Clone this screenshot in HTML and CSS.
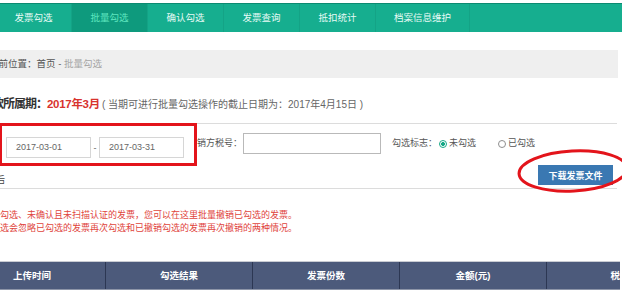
FILE: index.html
```html
<!DOCTYPE html>
<html lang="zh">
<head>
<meta charset="utf-8">
<link rel="stylesheet" href="styles.css">
</head>
<body>
<div class="page">
  <nav class="nav">
    <a class="nav-item">发票勾选</a>
    <a class="nav-item active">批量勾选</a>
    <a class="nav-item">确认勾选</a>
    <a class="nav-item">发票查询</a>
    <a class="nav-item">抵扣统计</a>
    <a class="nav-item wide">档案信息维护</a>
  </nav>
  <div class="main">
    <div class="crumb">当前位置：首页 - <span class="crumb-cur">批量勾选</span></div>
    <div class="heading"><span class="h-label">税款所属期：</span><span class="h-red">2017年3月</span><span class="h-note">( 当期可进行批量勾选操作的截止日期为：2017年4月15日 )</span></div>
    <div class="form">
      <div class="row1">
        <div class="date-group">
          <div class="input date">2017-03-01</div>
          <span class="dash">-</span>
          <div class="input date">2017-03-31</div>
        </div>
        <span class="label tax-label">销方税号：</span>
        <div class="input tax"></div>
        <span class="label flag-label">勾选标志：</span>
        <span class="radio checked"></span><span class="label opt opt-first">未勾选</span>
        <span class="radio"></span><span class="label opt">已勾选</span>
      </div>
      <div class="row2">
        <span class="cut-label">后</span>
        <button class="btn">下载发票文件</button>
      </div>
    </div>
    <div class="notice">
      <p>勾选、未确认且未扫描认证的发票，您可以在这里批量撤销已勾选的发票。</p>
      <p>选会忽略已勾选的发票再次勾选和已撤销勾选的发票再次撤销的两种情况。</p>
    </div>
    <div class="table-wrap">
      <div class="thead">
        <div class="th">上传时间</div>
        <div class="th">勾选结果</div>
        <div class="th">发票份数</div>
        <div class="th">金额(元)</div>
        <div class="th">税额</div>
      </div>
    </div>
  </div>
  <div class="mark-rect"></div>
  <svg class="mark-ellipse" width="112" height="50" viewBox="0 0 112 50">
    <ellipse cx="57" cy="24" rx="54" ry="20" fill="none" stroke="#e3141b" stroke-width="3" transform="rotate(-3 57 24)"/>
  </svg>
</div>
</body>
</html>
```
FILE: styles.css
```css
* { box-sizing: border-box; }
html, body { margin: 0; padding: 0; background: #fff; }
body {
  font-family: "Liberation Sans", "Noto Sans CJK SC", sans-serif;
  color: #333;
}
.page {
  position: relative;
  width: 622px;
  height: 290px;
  overflow: hidden;
  padding-top: 3px;
}
.nav {
  display: flex;
  height: 29px;
  margin-left: -4px;
  width: 630px;
  background: #16ae8f;
  border-top: 1px solid #0c8a71;
}
.nav-item {
  width: 76px;
  height: 28px;
  line-height: 28px;
  text-align: center;
  font-size: 9.5px;
  color: #e6fbf5;
  border-right: 1px solid #14a386;
}
.nav-item.wide { width: 94px; }
.nav-item.active {
  background: #0e9a7d;
  color: #5fe6bf;
}
.main { width: 617px; }
.crumb {
  margin-top: 18px;
  height: 28px;
  line-height: 28px;
  background: #efefef;
  width: 618px;
  font-size: 9.5px;
  color: #555;
  text-indent: -11px;
  white-space: nowrap;
  overflow: hidden;
}
.crumb-cur { color: #a5a5a5; }
.heading {
  padding: 17px 0 10px;
  line-height: 16px;
  border-bottom: 1px solid #dcdcdc;
  margin-left: -19px;
  white-space: nowrap;
}
.h-label { font-size: 12px; font-weight: bold; color: #333; letter-spacing: -1px; }
.h-red { font-size: 11.5px; font-weight: bold; color: #d8332e; margin-right: 2px; letter-spacing: -0.3px; }
.h-note { font-size: 10px; color: #666; }
.form {
  padding-top: 9px;
  padding-bottom: 3px;
  border-bottom: 1px solid #dcdcdc;
}
.row1 {
  display: flex;
  align-items: flex-start;
  height: 25px;
}
.date-group {
  display: flex;
  align-items: center;
  margin-left: 6px;
  margin-top: 4px;
}
.input {
  height: 21px;
  border: 1px solid #d6d6d6;
  background: #fff;
  font-size: 9px;
  line-height: 19px;
  color: #666;
}
.input.date { width: 85px; padding-left: 9px; }
.dash {
  width: 8px;
  text-align: center;
  font-size: 9px;
  color: #666;
}
.label {
  font-size: 9px;
  line-height: 21px;
  color: #555;
  white-space: nowrap;
}
.tax-label { margin-left: 13px; margin-right: 1px; }
.input.tax { width: 138px; border-color: #b9b9b9; }
.flag-label { margin-left: 11px; margin-right: 2px; }
.radio {
  width: 8px;
  height: 8px;
  margin-top: 7px;
  margin-right: 2px;
  border-radius: 50%;
  border: 1px solid #8e8e8e;
  background: #fff;
}
.radio.checked {
  border-color: #17a887;
  background: radial-gradient(circle, #17a887 0 1.8px, #fff 2.2px);
}
.opt { color: #555; }
.opt-first { margin-right: 22px; }
.row2 {
  display: flex;
  justify-content: space-between;
  align-items: flex-start;
  margin-top: 7px;
  height: 20px;
  padding-right: 4px;
}
.cut-label {
  font-size: 9px;
  line-height: 9px;
  margin-top: 11px;
  margin-left: -4px;
  color: #444;
}
.btn {
  height: 20px;
  width: 75px;
  padding: 0;
  border: 0;
  background: #3a78b2;
  color: #fff;
  font-family: "Noto Sans CJK SC", sans-serif;
  font-size: 9px;
  font-weight: bold;
}
.notice {
  margin-top: 20px;
  font-size: 9px;
  line-height: 13px;
  color: #e0443c;
  white-space: nowrap;
}
.notice p { margin: 0; }
.table-wrap {
  margin-top: 26px;
  margin-left: -41px;
  width: 661px;
  overflow: hidden;
  border-top: 1px solid #c9ccd3;
}
.thead {
  display: grid;
  grid-template-columns: repeat(5, 147px);
  height: 28px;
  background: #4c5a7b;
  border-bottom: 1px solid #8d95a8;
}
.th {
  border-right: 1px solid #2c3753;
  color: #fff;
  font-size: 9.5px;
  font-weight: bold;
  line-height: 27px;
  text-align: center;
}
.mark-rect {
  position: absolute;
  left: -1px;
  top: 123px;
  width: 198px;
  height: 43px;
  border: 3px solid #e3141b;
}
.mark-ellipse {
  position: absolute;
  left: 516px;
  top: 147px;
}
```
